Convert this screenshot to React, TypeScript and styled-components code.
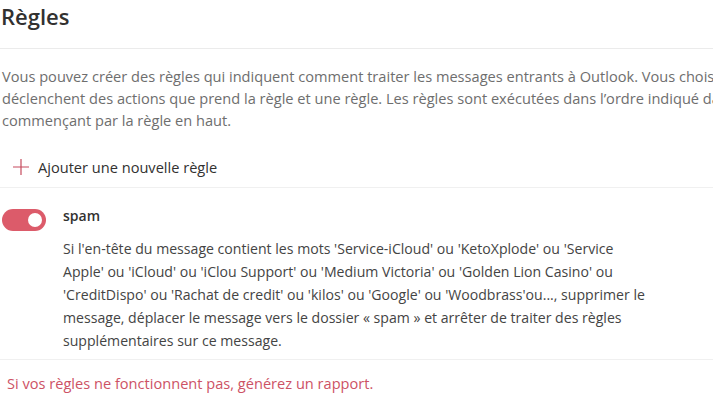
import React from "react";
import styled, { createGlobalStyle } from "styled-components";

const GlobalStyle = createGlobalStyle`
  html, body {
    margin: 0;
    padding: 0;
    background: #ffffff;
    overflow: hidden;
  }
  body {
    font-family: "Open Sans", "Noto Sans", sans-serif;
    -webkit-font-smoothing: antialiased;
  }
`;

const Page = styled.main`
  width: 713px;
  height: 410px;
  overflow: hidden;
  color: #323130;
`;

const Title = styled.h1`
  margin: 0;
  padding: 0 0 0 1px;
  height: 48px;
  font-size: 22px;
  font-weight: 600;
  line-height: 32px;
  color: #323130;
  border-bottom: 1px solid #ebebeb;
`;

const Intro = styled.p`
  margin: 0;
  padding: 16px 0 0 2px;
  width: 820px;
  font-size: 14.6px;
  line-height: 22px;
  color: #6e6e6e;
  white-space: nowrap;
`;

const AddRow = styled.button`
  display: flex;
  align-items: center;
  gap: 8px;
  width: 100%;
  height: 42px;
  margin-top: 15px;
  padding: 0 0 0 12px;
  border: none;
  border-bottom: 1px solid #f0f0f0;
  background: transparent;
  font-family: inherit;
  font-size: 14.6px;
  color: #323130;
  cursor: pointer;
`;

const RuleRow = styled.section`
  display: flex;
  gap: 17px;
  padding: 18px 0 7px 2px;
  border-bottom: 1px solid #f0f0f0;
`;

const Toggle = styled.span<{ $on: boolean }>`
  position: relative;
  flex: none;
  width: 44px;
  height: 22px;
  margin-top: 3px;
  border-radius: 11px;
  background: ${(p) => (p.$on ? "#dc5b6a" : "#c8c6c4")};

  &::after {
    content: "";
    position: absolute;
    top: 4px;
    left: ${(p) => (p.$on ? "26px" : "4px")};
    width: 14px;
    height: 14px;
    border-radius: 50%;
    background: #ffffff;
  }
`;

const RuleBody = styled.div`
  display: flex;
  flex-direction: column;
  gap: 11px;
`;

const RuleName = styled.div`
  font-size: 14px;
  font-weight: 600;
  line-height: 20px;
  color: #323130;
`;

const RuleText = styled.p`
  margin: 0;
  font-size: 14.1px;
  line-height: 23px;
  color: #444444;
  white-space: nowrap;
`;

const ReportLink = styled.a`
  display: block;
  margin-top: 12px;
  padding-left: 7px;
  font-size: 14.6px;
  line-height: 22px;
  color: #cd5265;
  text-decoration: none;
`;

const PlusIcon = () => (
  <svg width="18" height="18" viewBox="0 0 18 18" aria-hidden="true">
    <path d="M9 1v16M1 9h16" stroke="#c64b5e" strokeWidth="1.2" fill="none" />
  </svg>
);

export default function App() {
  return (
    <>
      <GlobalStyle />
      <Page>
        <Title>Règles</Title>
        <Intro>
          Vous pouvez créer des règles qui indiquent comment traiter les messages entrants à Outlook. Vous choisissez les conditions qui
          <br />
          déclenchent des actions que prend la règle et une règle. Les règles sont exécutées dans l’ordre indiqué dans la liste,
          <br />
          commençant par la règle en haut.
        </Intro>
        <AddRow>
          <PlusIcon />
          Ajouter une nouvelle règle
        </AddRow>
        <RuleRow>
          <Toggle $on={true} />
          <RuleBody>
            <RuleName>spam</RuleName>
            <RuleText>
              Si l'en-tête du message contient les mots 'Service-iCloud' ou 'KetoXplode' ou 'Service
              <br />
              Apple' ou 'iCloud' ou 'iClou Support' ou 'Medium Victoria' ou 'Golden Lion Casino' ou
              <br />
              'CreditDispo' ou 'Rachat de credit' ou 'kilos' ou 'Google' ou 'Woodbrass'ou..., supprimer le
              <br />
              message, déplacer le message vers le dossier « spam » et arrêter de traiter des règles
              <br />
              supplémentaires sur ce message.
            </RuleText>
          </RuleBody>
        </RuleRow>
        <ReportLink href="#">Si vos règles ne fonctionnent pas, générez un rapport.</ReportLink>
      </Page>
    </>
  );
}
